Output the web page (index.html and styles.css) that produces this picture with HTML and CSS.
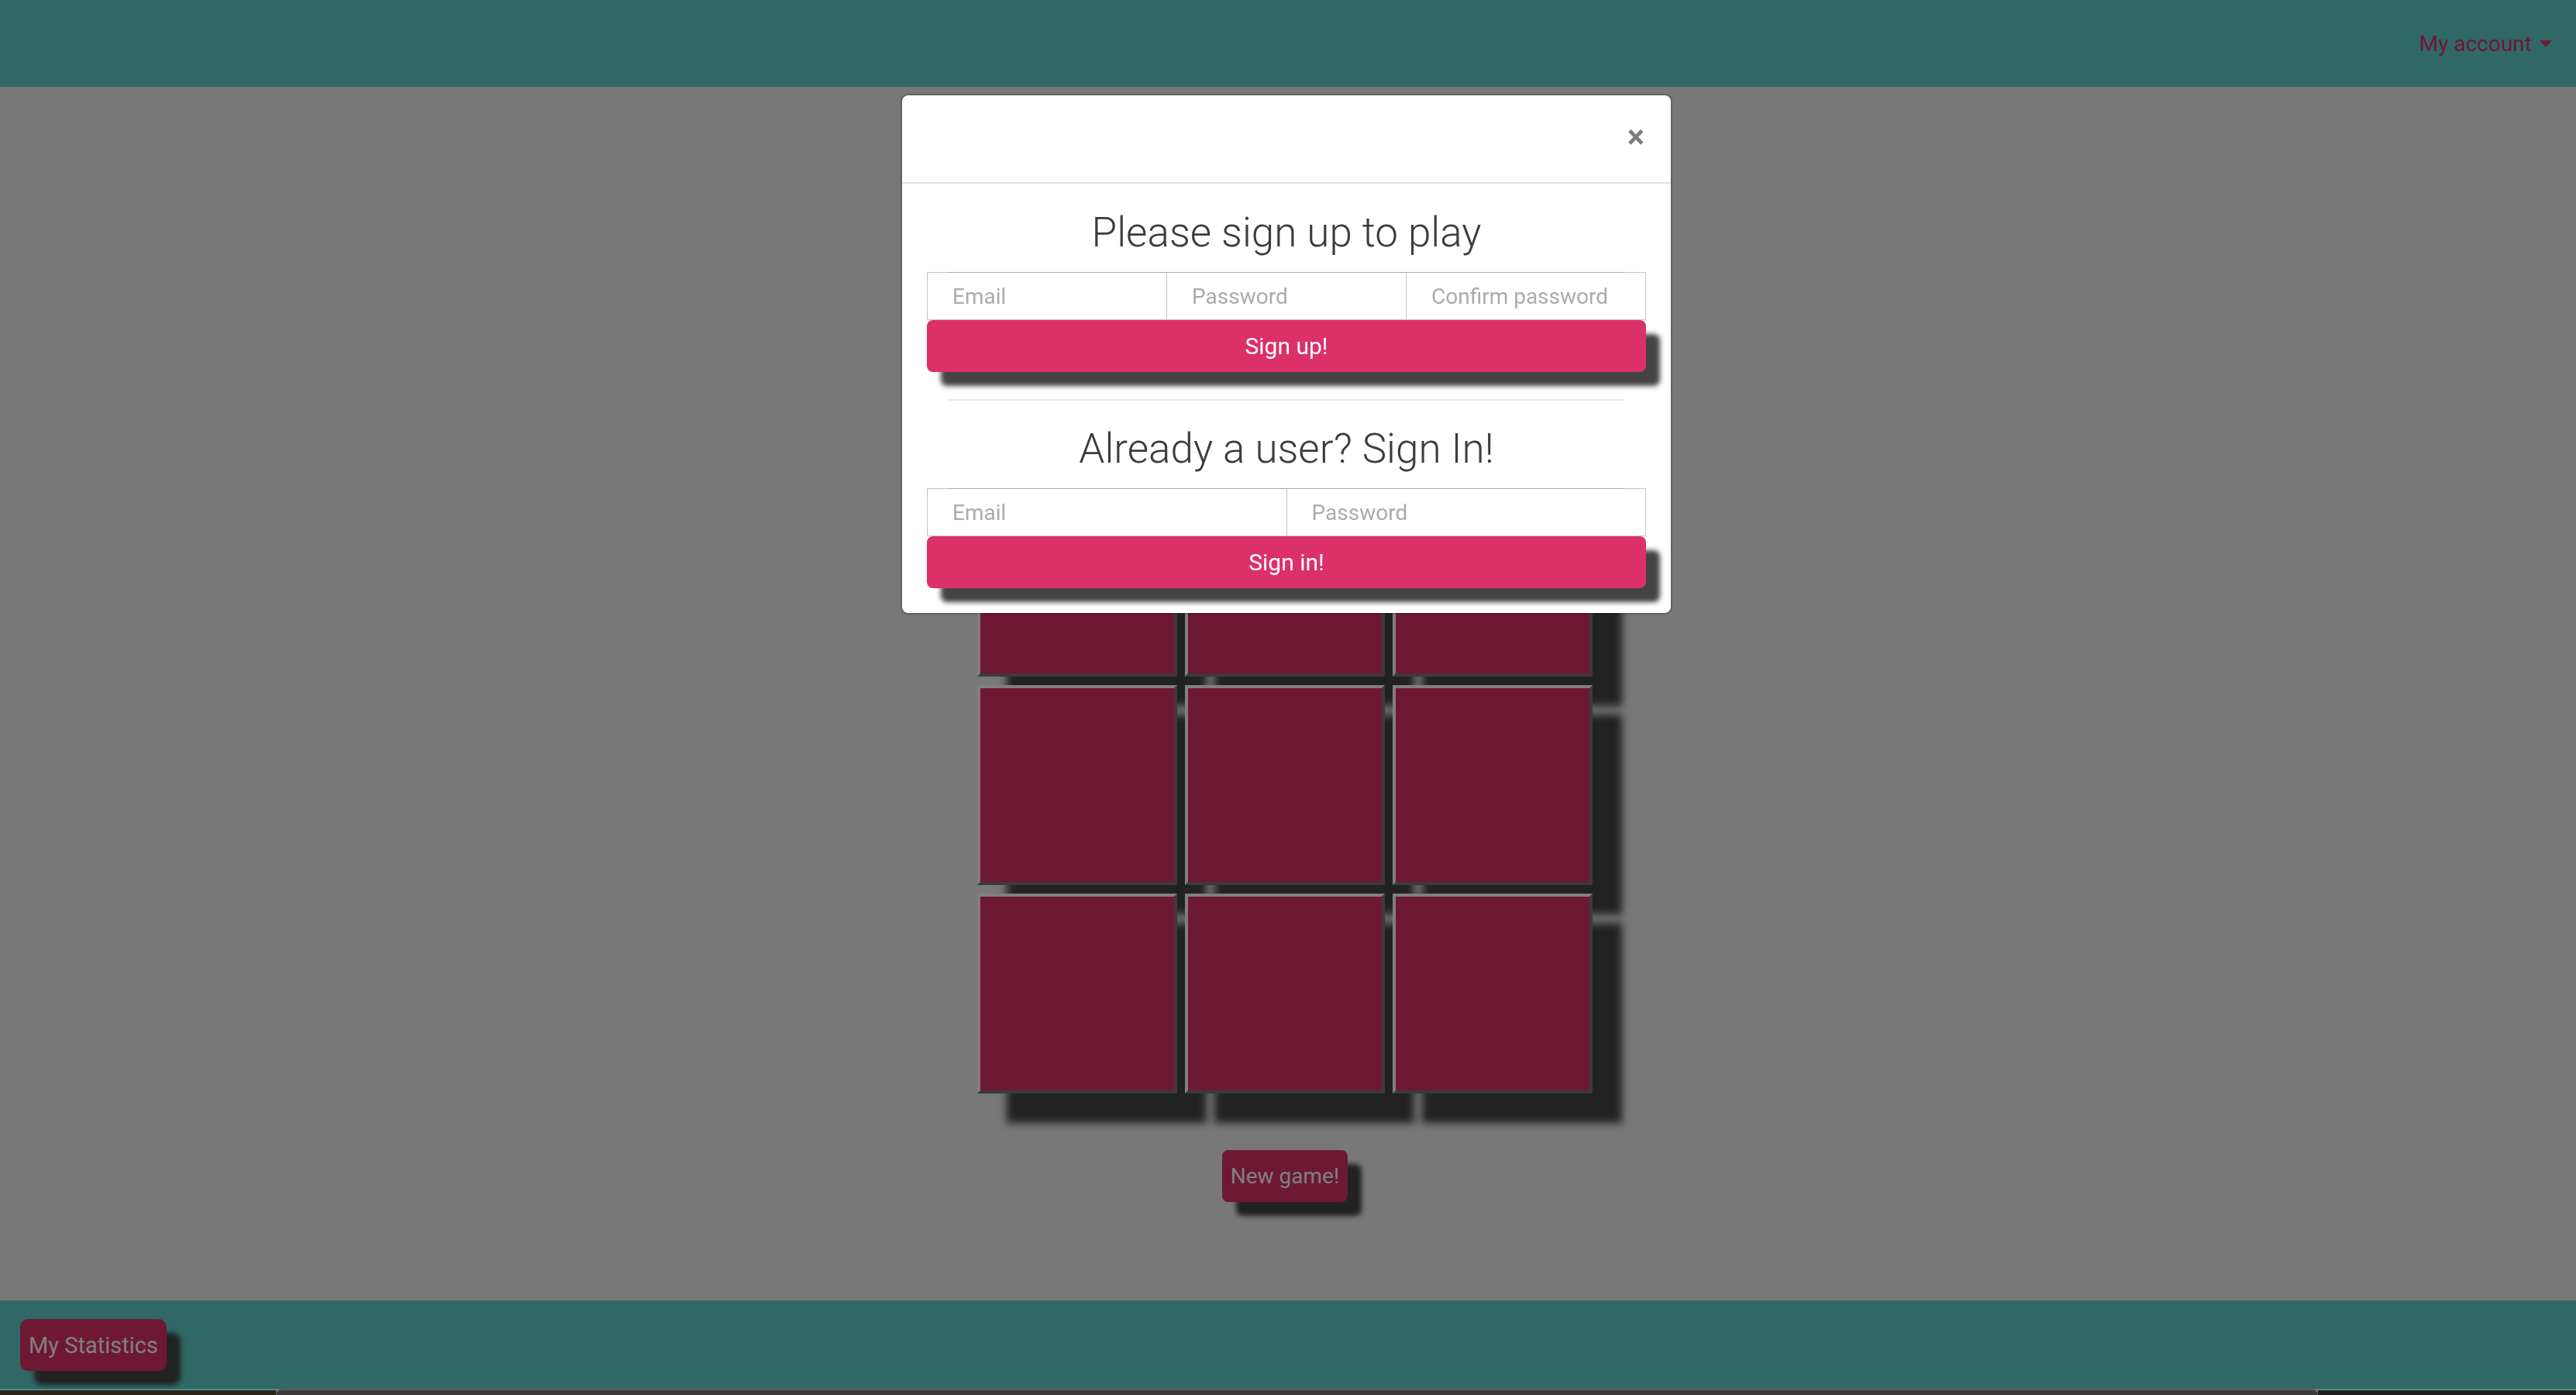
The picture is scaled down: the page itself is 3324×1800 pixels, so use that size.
FILE: index.html
```html
<!DOCTYPE html>
<html lang="en">
<head>
<meta charset="utf-8">
<title>Tic Tac Toe</title>
<link rel="stylesheet" href="styles.css">
</head>
<body>
<div class="page">
  <nav class="navbar">
    <div class="account">My account <span class="caret"></span></div>
  </nav>
  <main class="game">
    <div class="board">
      <div class="tile"></div><div class="tile"></div><div class="tile"></div>
      <div class="tile"></div><div class="tile"></div><div class="tile"></div>
      <div class="tile"></div><div class="tile"></div><div class="tile"></div>
    </div>
    <button class="btn btn-game">New game!</button>
  </main>
  <footer class="footer">
    <button class="btn btn-stats">My Statistics</button>
  </footer>
  <div class="dock">
    <div class="dock-left"></div>
    <div class="dock-tab"></div>
    <div class="dock-right"></div>
  </div>
</div>
<div class="backdrop"></div>
<div class="modal">
  <div class="modal-content">
    <div class="modal-header">
      <button class="close">&times;</button>
    </div>
    <div class="modal-body">
      <h2 class="title">Please sign up to play</h2>
      <div class="fields">
        <input class="field" type="email" placeholder="Email">
        <input class="field" type="password" placeholder="Password">
        <input class="field" type="password" placeholder="Confirm password">
      </div>
      <button class="btn btn-block">Sign up!</button>
      <hr class="divider">
      <h2 class="title">Already a user? Sign In!</h2>
      <div class="fields">
        <input class="field" type="email" placeholder="Email">
        <input class="field" type="password" placeholder="Password">
      </div>
      <button class="btn btn-block">Sign in!</button>
    </div>
  </div>
</div>
</body>
</html>
```
FILE: styles.css
```css
* { box-sizing: border-box; }
html, body { margin: 0; height: 100%; }
body {
  font-family: Roboto, "Liberation Sans", sans-serif;
  background: #f0f0f0;
  overflow: hidden;
}
.page {
  display: flex;
  flex-direction: column;
  height: 1800px;
}
.navbar {
  flex: none;
  height: 112px;
  background: #5ed0cc;
  display: flex;
  justify-content: flex-end;
  align-items: center;
  padding: 0 31px 0 0;
}
.account {
  color: #dc3068;
  font-size: 28px;
  display: flex;
  align-items: center;
  gap: 10px;
}
.caret {
  width: 0;
  height: 0;
  border-top: 9px solid #dc3068;
  border-left: 8px solid transparent;
  border-right: 8px solid transparent;
}
.game {
  flex: 1;
  display: flex;
  flex-direction: column;
  align-items: center;
  padding: 503px 8px 0 0;
}
.board {
  display: grid;
  grid-template-columns: repeat(3, 258px);
  grid-auto-rows: 258px;
  column-gap: 10px;
  row-gap: 11px;
}
.tile {
  background: #dc3068;
  border: 4px solid;
  border-color: #ffffff #767676 #767676 #ffffff;
  box-shadow: 38px 38px 10px #444;
}
.btn {
  background: #dc3068;
  color: #fff;
  border: 0;
  border-radius: 8px;
  font-family: inherit;
  font-size: 28px;
  box-shadow: 18px 18px 6px #444;
  cursor: pointer;
}
.btn-game {
  margin-top: 73px;
  height: 67px;
  padding: 0 11px;
}
.footer {
  flex: none;
  height: 114px;
  background: #5ed0cc;
  padding: 24px 26px;
}
.btn-stats {
  height: 67px;
  padding: 0 11px;
  border-radius: 10px;
  font-size: 29px;
}
.dock {
  flex: none;
  height: 8px;
  position: relative;
  z-index: 3;
  display: flex;
}
.dock-left {
  width: 356px;
  background: #2a251b;
  border-top: 2px solid #4f8a87;
}
.dock-tab {
  flex: 1;
  background: #3b3939;
  border-top: 2px solid #5c5c5c;
  border-radius: 8px 8px 0 0;
}
.dock-right {
  width: 333px;
  background: #1f1f1f;
  border-top: 2px solid #4f8a87;
}
.backdrop {
  position: fixed;
  inset: 0;
  background: rgba(0, 0, 0, 0.5);
  z-index: 1;
}
.modal {
  position: fixed;
  inset: 0;
  z-index: 2;
  display: flex;
  justify-content: center;
  align-items: flex-start;
  padding: 121px 4px 0 0;
}
.modal-content {
  width: 996px;
  background: #fff;
  background-clip: padding-box;
  border: 2px solid rgba(0, 0, 0, 0.2);
  border-radius: 10px;
}
.modal-header {
  height: 114px;
  border-bottom: 2px solid #dee2e6;
  display: flex;
  justify-content: flex-end;
  align-items: center;
  padding: 0 34px 4px 0;
}
.close {
  font-family: inherit;
  font-size: 42px;
  font-weight: 700;
  line-height: 1;
  color: #000;
  opacity: 0.5;
  background: none;
  border: 0;
  padding: 0;
}
.modal-body {
  padding: 32px;
}
.title {
  font-size: 53px;
  font-weight: 300;
  color: #3c3c3c;
  text-align: center;
  line-height: 62px;
  margin: 0 0 20px;
}
.fields {
  display: flex;
  position: relative;
}
.fields::before {
  content: "";
  position: absolute;
  top: 0;
  left: 28px;
  right: 28px;
  border-top: 1px solid #a9a9a9;
  z-index: 1;
}
.field {
  flex: 1;
  min-width: 0;
  height: 62px;
  border: 1px solid #c4c4c4;
  margin: 0 0 0 -1px;
  padding: 0 32px;
  font-family: inherit;
  font-size: 28px;
  color: #495057;
  background: #fff;
  outline: none;
}
.field:first-child { margin-left: 0; }
.field::placeholder { color: #ababab; }
.btn-block {
  display: block;
  width: 100%;
  height: 67px;
  font-size: 30px;
}
.divider {
  margin: 35px 28px 31px;
  border: 0;
  border-top: 2px solid #e8e8e8;
}
```
